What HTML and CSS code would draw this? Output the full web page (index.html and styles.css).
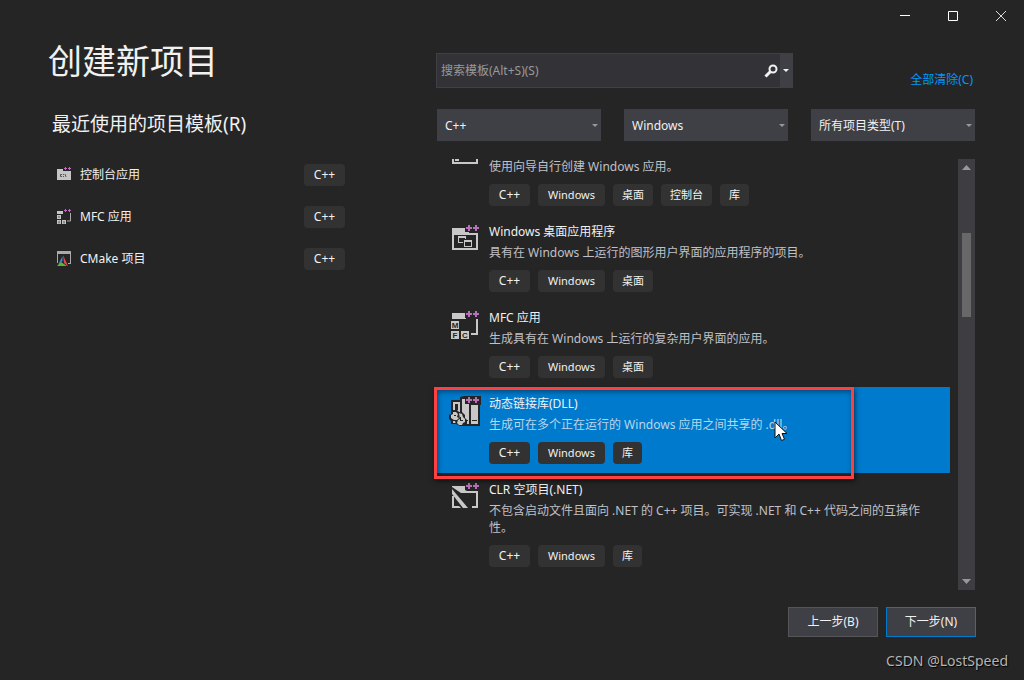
FILE: index.html
```html
<!DOCTYPE html>
<html lang="zh-CN">
<head>
<meta charset="utf-8">
<title>创建新项目</title>
<link rel="stylesheet" href="styles.css">
</head>
<body>
<svg class="defs" aria-hidden="true">
  <symbol id="plusplus" viewBox="0 0 32 32">
    <path fill="#b870b8" d="M19 2h2v2h2v2h-2v2h-2V6h-2V4h2zM26 2h2v2h2v2h-2v2h-2V6h-2V4h2z"/>
  </symbol>
</svg>
<div class="window">
  <header class="titlebar">
    <button class="caption" aria-label="最小化"><svg width="12" height="12"><path d="M1 5.500h10" stroke="#fff"/></svg></button>
    <button class="caption" aria-label="最大化"><svg width="12" height="12"><path d="M1.500 1.500h9v9h-9z" stroke="#fff" fill="none"/></svg></button>
    <button class="caption" aria-label="关闭"><svg width="12" height="12"><path d="M1 1l10 10M11 1L1 11" stroke="#ddd"/></svg></button>
  </header>
  <main class="main">
    <section class="recent">
      <h1>创建新项目</h1>
      <h2>最近使用的项目模板(R)</h2>
      <ul class="recent-list">
        <li>
          <svg class="small-icon" width="16" height="16" viewBox="0 0 16 16"><path fill="#c5c5c5" d="M1 2h6v2h8v9H1z"/><path d="M6 7.500H4.500v2H6M7.500 7v1M7.500 9v1M9 7l1 3" stroke="#555" fill="none"/><path stroke="#b870b8" d="M8 1.500h3M9.500 0v3M12 1.500h3M13.500 0v3"/></svg>
          <span class="recent-name">控制台应用</span><span class="tag tag-lang">C++</span>
        </li>
        <li>
          <svg class="small-icon" width="16" height="16" viewBox="0 0 16 16"><path fill="#c5c5c5" d="M1 2h6v3H1zM1 6h4v4H1zM1 11h4v4H1zM6 11h4v4H6z"/><path d="M2.500 7.500v1M3.500 7.500v1M3 12v2.500M8 12v2.500" stroke="#555"/><path d="M14.500 4v8H11" stroke="#aaa" fill="none"/><path stroke="#b870b8" d="M8 1.500h3M9.500 0v3M12 1.500h3M13.500 0v3"/></svg>
          <span class="recent-name">MFC 应用</span><span class="tag tag-lang">C++</span>
        </li>
        <li>
          <svg class="small-icon" width="16" height="16" viewBox="0 0 16 16"><path fill="#aaa" d="M1 0h14v13h-3v-1h2V3H2v9H1z"/><path fill="#3c8ad8" d="M6.500 5v5L2 14z"/><path fill="#e5484d" d="M7 4l5 11-4-3z"/><path fill="#5cb531" d="M1 15l4-4 6 4z"/></svg>
          <span class="recent-name">CMake 项目</span><span class="tag tag-lang">C++</span>
        </li>
      </ul>
    </section>

    <section class="templates">
      <div class="search-row">
        <form class="search">
          <input type="text" aria-label="搜索模板" placeholder="搜索模板(Alt+S)(S)">
          <button type="button" class="search-go" aria-label="搜索"><svg width="14" height="14" viewBox="0 0 14 14"><circle cx="9" cy="5" r="3.500" fill="none" stroke="#f1f1f1" stroke-width="2"/><path d="M6.500 7.500L1.500 12.500" stroke="#f1f1f1" stroke-width="3"/></svg></button>
          <button type="button" class="search-more" aria-label="搜索选项"><svg width="6" height="3"><path d="M0 0h6L3 3z" fill="#f1f1f1"/></svg></button>
        </form>
        <a class="clear" href="#">全部清除(C)</a>
      </div>
      <div class="filters">
        <div class="filter"><select aria-label="语言"><option>C++</option></select><svg class="arrow" width="6" height="3"><path d="M0 0h6L3 3z" fill="#999"/></svg></div>
        <div class="filter"><select aria-label="平台"><option>Windows</option></select><svg class="arrow" width="6" height="3"><path d="M0 0h6L3 3z" fill="#999"/></svg></div>
        <div class="filter"><select aria-label="项目类型"><option>所有项目类型(T)</option></select><svg class="arrow" width="6" height="3"><path d="M0 0h6L3 3z" fill="#999"/></svg></div>
      </div>
      <div class="results">
        <ul class="list">
          <li class="item item-cut">
            <svg class="icon" width="32" height="6"><path fill="#c8c8c8" d="M3 0h2v3h22V0h2v5H3zM6 0h4v2H6z"/></svg>
            <div class="info">
              <p class="desc">使用向导自行创建 Windows 应用。</p>
              <div class="tags"><span class="tag tag-lang">C++</span><span class="tag tag-os">Windows</span><span class="tag">桌面</span><span class="tag">控制台</span><span class="tag">库</span></div>
            </div>
          </li>
          <li class="item">
            <svg class="icon" width="32" height="32" viewBox="0 0 32 32">
              <path fill="#c8c8c8" fill-rule="evenodd" d="M3 5h13v4h4v1h9v17H3zM5 12v13h22V12z"/>
              <path fill="#c8c8c8" fill-rule="evenodd" d="M9 13h8v7H9zM10 15v4h6v-4z"/>
              <path fill="#252526" d="M14 16h10v9H14z"/>
              <path fill="#c8c8c8" fill-rule="evenodd" d="M15 17h8v7h-8zM16 19v4h6v-4z"/>
              <use href="#plusplus"/>
            </svg>
            <div class="info">
              <h3>Windows 桌面应用程序</h3>
              <p class="desc">具有在 Windows 上运行的图形用户界面的应用程序的项目。</p>
              <div class="tags"><span class="tag tag-lang">C++</span><span class="tag tag-os">Windows</span><span class="tag">桌面</span></div>
            </div>
          </li>
          <li class="item">
            <svg class="icon" width="32" height="32" viewBox="0 0 32 32">
              <path fill="#c8c8c8" d="M3 4h13v5h1v1H3zM2 12h8v8H2zM2 22h8v8H2zM12 22h8v8h-8zM27 10h2v16h-7v-2h5z"/>
              <g class="icon-letters"><text x="6" y="19">M</text><text x="6" y="29">F</text><text x="16" y="29">C</text></g>
              <use href="#plusplus"/>
            </svg>
            <div class="info">
              <h3>MFC 应用</h3>
              <p class="desc">生成具有在 Windows 上运行的复杂用户界面的应用。</p>
              <div class="tags"><span class="tag tag-lang">C++</span><span class="tag tag-os">Windows</span><span class="tag">桌面</span></div>
            </div>
          </li>
          <li class="item item-selected">
            <svg class="icon" width="32" height="32" viewBox="0 0 32 32">
              <path fill="#252526" d="M2 5h9V2l4-1h17v9h-1v21H11v-2H2z"/>
              <path fill="#c8c8c8" d="M4 7h7v21H4zM13 4h3v5h4v20h-7zM22 10h7v19h-7z"/>
              <path fill="#252526" d="M6 9h3v6H6zM14 25h5v1h-5zM23 25h5v1h-5z"/>
              <path fill="#252526" d="M4 15h4l2 2h3l3 3v3l2 2v4l-3 2h-4l-4-2-1-3H2l-2-2v-4l4-2z"/>
              <path fill="#c8c8c8" d="M4 17h3l2 2-1 3 2 1-2 2H5l-3-2v-3l2-1zM10 18l3 1 1 3 2 2v3l-2 1-1 2h-3l-2-2 1-3 2-1z"/>
              <path fill="#252526" d="M11 22h1v3h2v1h-3zM5 20h2v1H5z"/>
              <use href="#plusplus"/>
            </svg>
            <div class="info">
              <h3>动态链接库(DLL)</h3>
              <p class="desc">生成可在多个正在运行的 Windows 应用之间共享的 .dll。</p>
              <div class="tags"><span class="tag tag-lang">C++</span><span class="tag tag-os">Windows</span><span class="tag">库</span></div>
            </div>
            <div class="highlight"></div>
            <svg class="cursor" width="14" height="21" viewBox="0 0 14 21"><path d="M1 1v16l4-4 2.500 6.500 3-1.200L8 12.500h5z" fill="#fff" stroke="#111"/></svg>
          </li>
          <li class="item">
            <svg class="icon" width="32" height="32" viewBox="0 0 32 32">
              <path fill="#c8c8c8" d="M3 5h13v4l2 1h11v17h-6v-2h4V12H12L3 6z"/>
              <path fill="#c8c8c8" d="M3 8l16 19h-5L3 13z"/>
              <path fill="#c8c8c8" d="M3 15h2v10h5l2 2H3z"/>
              <use href="#plusplus"/>
            </svg>
            <div class="info">
              <h3>CLR 空项目(.NET)</h3>
              <p class="desc">不包含启动文件且面向 .NET 的 C++ 项目。可实现 .NET 和 C++ 代码之间的互操作性。</p>
              <div class="tags"><span class="tag tag-lang">C++</span><span class="tag tag-os">Windows</span><span class="tag">库</span></div>
            </div>
          </li>
        </ul>
        <div class="scrollbar" aria-hidden="true">
          <svg width="9" height="5"><path d="M0 5h9L4.500 0z" fill="#999"/></svg>
          <div class="track"><div class="thumb"></div></div>
          <svg width="9" height="5"><path d="M0 0h9L4.500 5z" fill="#999"/></svg>
        </div>
      </div>
      <div class="actions">
        <button class="btn">上一步(B)</button>
        <button class="btn btn-primary">下一步(N)</button>
      </div>
    </section>
  </main>
  <footer class="credit">CSDN @LostSpeed</footer>
</div>
</body>
</html>
```
FILE: styles.css
```css
* { box-sizing: border-box; }

body {
  margin: 0;
  background: #252526;
  color: #f1f1f1;
  font: 12px/18px "Noto Sans", "Noto Sans CJK SC", sans-serif;
}

h1, h2, h3, p, ul { margin: 0; padding: 0; font-weight: 400; }
h3 { font-size: 12px; }
ul { list-style: none; }
button, input, select { font: inherit; color: inherit; border: 0; border-radius: 0; padding: 0; margin: 0; background: none; }
svg { display: block; flex: none; }
.defs { position: absolute; width: 0; height: 0; }

.window { min-height: 100vh; display: flex; flex-direction: column; }

.titlebar { display: flex; justify-content: flex-end; height: 32px; }
.caption { width: 48px; padding-left: 2px; display: flex; align-items: center; justify-content: center; }

.main {
  flex: 1;
  display: grid;
  grid-template-columns: 297px minmax(0, 1fr);
  column-gap: 91px;
  padding: 0 48px;
}

.recent { padding-top: 6px; }
.recent h1 { font-size: 34px; line-height: 46px; }
.recent h2 { font-size: 19px; line-height: 26px; margin: 27px 0 27px 4px; }
.recent-list { display: grid; gap: 20px; padding-left: 8px; }
.recent-list li { display: flex; align-items: center; gap: 8px; }
.recent-name { flex: 1; }

.tag {
  height: 22px;
  padding: 0 9px;
  border-radius: 4px;
  background: #323233;
  font-size: 11px;
  line-height: 22px;
  text-align: center;
  white-space: nowrap;
}
.tag-lang { min-width: 41px; font-size: 12px; }
.tag-os { min-width: 67px; }

.templates { display: flex; flex-direction: column; padding-top: 21px; }
.search-row { display: flex; justify-content: space-between; align-items: flex-end; }
.search { display: flex; width: 357px; height: 35px; background: #333337; border: 1px solid #3f3f46; }
.search input { flex: 1; min-width: 0; padding-left: 4px; outline: 0; }
.search input::placeholder { color: #999; opacity: 1; }
.search-go { width: 18px; display: grid; place-items: center; }
.search-more { width: 12px; display: grid; place-items: center; background: #3f3f46; }
.clear { color: #0097fb; line-height: 16px; text-decoration: none; margin-right: 3px; }

.filters { display: grid; grid-template-columns: repeat(3, 1fr); gap: 23px; margin: 21px 0 18px; padding: 0 1px; }
.filter { position: relative; }
.filter select { appearance: none; display: block; width: 100%; height: 32px; padding: 1px 16px 0 8px; background: #3f3f46; }
.arrow { position: absolute; right: 3px; top: 15px; }

.results { flex: 1; display: flex; gap: 8px; padding-right: 1px; }
.list { flex: 1; min-width: 0; }
.item { position: relative; display: flex; gap: 8px; padding: 8px 8px 9px 13px; }
.item:last-child { padding-bottom: 0; }
.item-cut { height: 56px; padding-top: 0; overflow: hidden; }
.item-cut .info { align-self: flex-end; }
.desc { line-height: 17px; margin: 3px 0 9px; color: #c0c0c8; }
.tags { display: flex; gap: 8px; }
.item-selected { background: #007acc; }
.item-selected .desc { color: #b8d6ec; }
.icon-letters { font: 700 8px "Liberation Sans", sans-serif; text-anchor: middle; fill: #252526; }

.highlight {
  position: absolute;
  left: -2px;
  top: 0;
  right: 96px;
  bottom: -6px;
  border: 3px solid #ff4040;
  box-shadow: 1px 2px 5px rgba(0, 0, 0, 0.6), inset 1px 2px 5px rgba(0, 0, 0, 0.4);
  z-index: 1;
}
.cursor { position: absolute; left: 338px; top: 34px; z-index: 2; }

.scrollbar { width: 17px; display: flex; flex-direction: column; align-items: center; padding: 6px 0; background: #3e3e42; }
.track { flex: 1; width: 9px; padding-top: 63px; }
.thumb { height: 84px; background: #686868; }

.actions { display: flex; justify-content: flex-end; gap: 8px; margin-top: 17px; }
.btn { width: 90px; height: 30px; background: #3f3f46; border: 1px solid #555558; }
.btn-primary { border-color: #007acc; }

.credit {
  margin-top: 14px;
  padding: 0 16px 9px 0;
  text-align: right;
  font-size: 14px;
  line-height: 20px;
  color: #b4b4b4;
  text-shadow: 1px 1px 1px #000;
}
```
